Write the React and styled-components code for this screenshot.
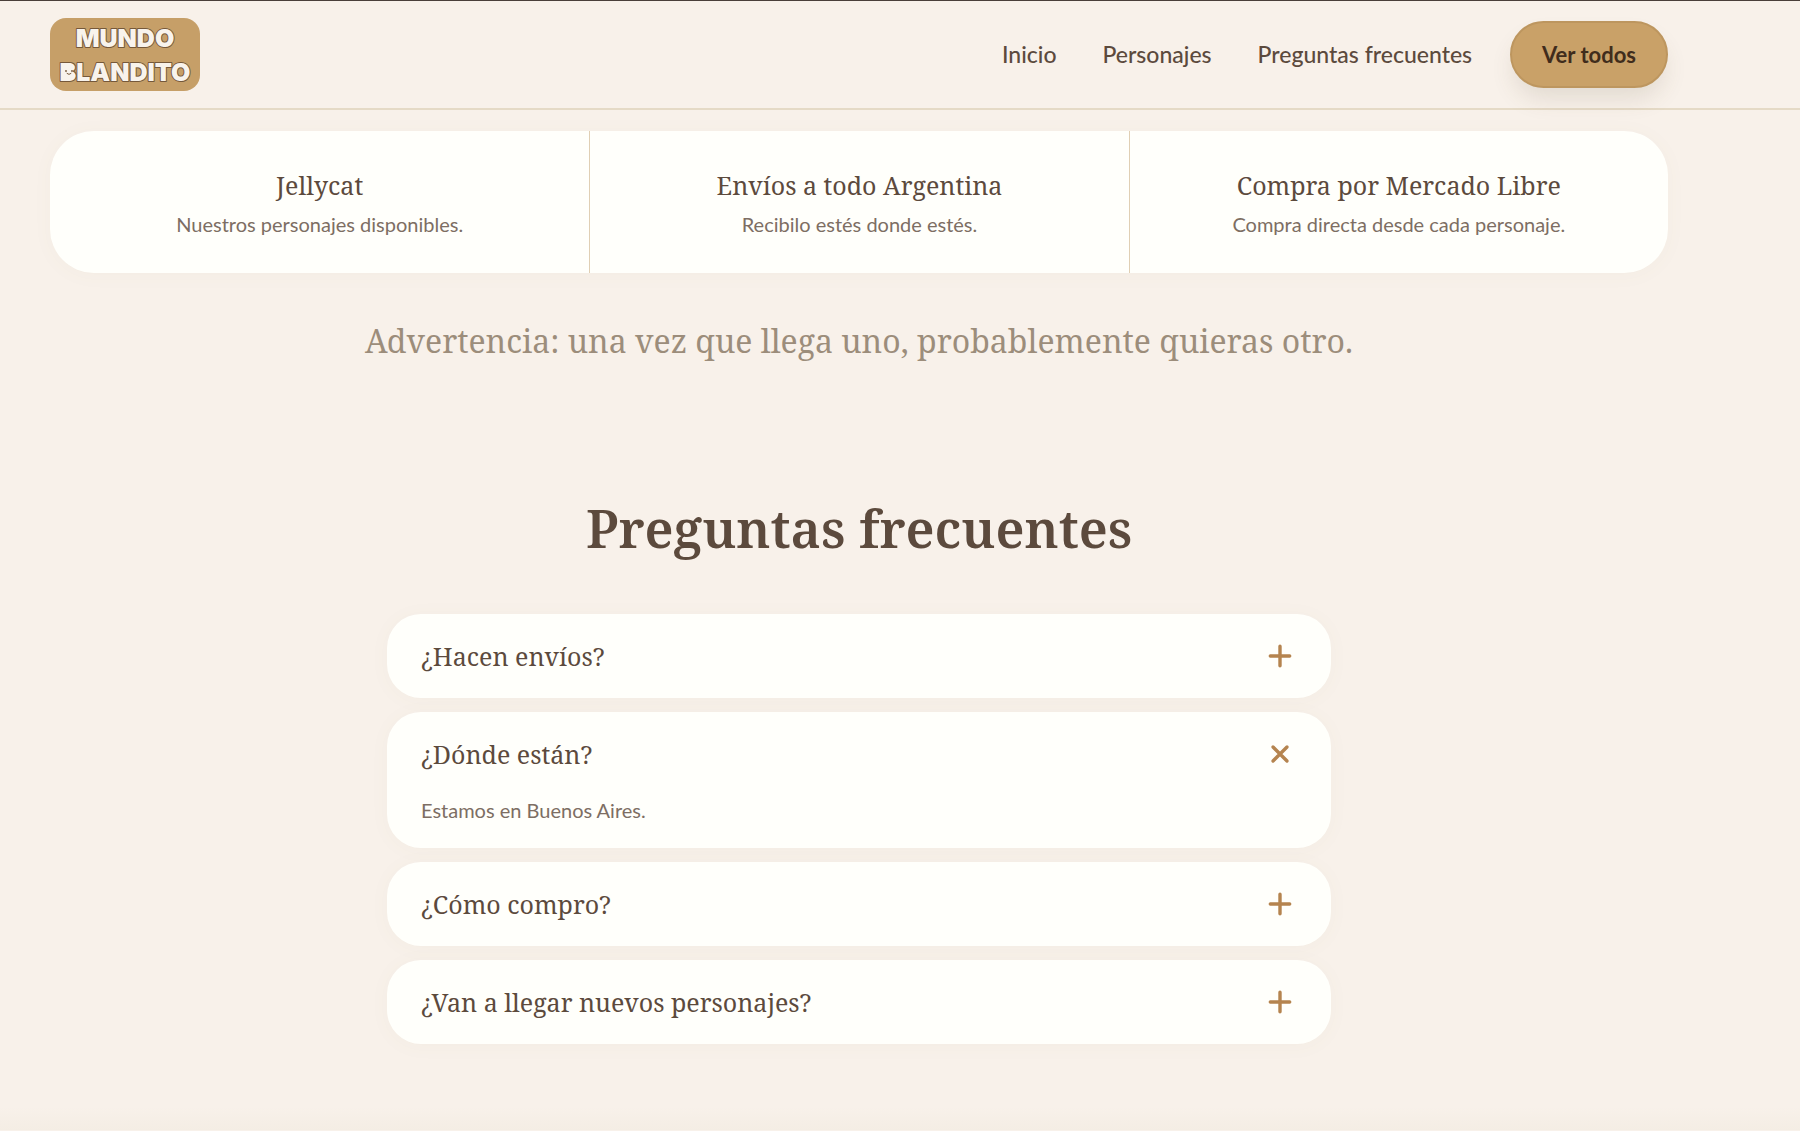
import React, { useState } from "react";
import styled, { createGlobalStyle, ThemeProvider } from "styled-components";

const theme = {
  background: "#f8f1ea",
  surface: "#fffffb",
  line: "#e5dac6",
  divider: "#e0cfb4",
  primary: "#c9a168",
  accent: "#b5844f",
  heading: "#5c4a3d",
  text: "#7d6e63",
  muted: "#9c8d7b",
  serif: '"Noto Serif", "DejaVu Serif Condensed", "DejaVu Serif", serif',
  sans: 'Lato, "Open Sans", sans-serif',
};

const GlobalStyle = createGlobalStyle`
  *, *::before, *::after {
    box-sizing: border-box;
  }
  body {
    margin: 0;
    background: ${({ theme }) => theme.background};
    color: ${({ theme }) => theme.heading};
    font-family: ${({ theme }) => theme.sans};
  }
  h1, h2, h3, p, ul {
    margin: 0;
    padding: 0;
  }
`;

// Header
const Header = styled.header`
  display: flex;
  align-items: center;
  justify-content: space-between;
  min-height: 110px;
  padding: 0 132px 0 50px;
  border-top: 1px solid #4a3f3a;
  border-bottom: 2px solid ${({ theme }) => theme.line};
`;

const LogoLink = styled.a`
  display: block;
  height: 73px;
  border-radius: 16px;
  overflow: hidden;
`;

const LogoText = styled.text`
  font-family: Inter, sans-serif;
  font-weight: 900;
  font-size: 25px;
  text-anchor: middle;
  fill: #f8f3ec;
  stroke: #75583a;
  stroke-width: 2px;
  stroke-linejoin: round;
  paint-order: stroke;
`;

const Nav = styled.nav`
  display: flex;
  align-items: center;
  gap: 46px;
`;

const NavLink = styled.a`
  padding-bottom: 2px;
  color: ${({ theme }) => theme.heading};
  font-size: 23px;
  font-weight: 500;
  line-height: 32px;
  text-decoration: none;
`;

const NavButton = styled.button`
  height: 67px;
  margin-left: -8px;
  padding: 0 30px;
  border: 2px solid #bd965f;
  border-radius: 34px;
  background: ${({ theme }) => theme.primary};
  color: #402c1c;
  font-family: inherit;
  font-size: 22px;
  font-weight: 700;
  box-shadow: 0 14px 24px -4px rgba(92, 80, 50, 0.14);
  cursor: pointer;
`;

// Main content
const Main = styled.main`
  padding: 21px 132px 63px 50px;
`;

const Features = styled.ul`
  display: grid;
  grid-template-columns: repeat(3, 1fr);
  list-style: none;
  border-radius: 44px;
  background: ${({ theme }) => theme.surface};
  box-shadow: 0 2px 20px rgba(120, 140, 80, 0.04);
`;

const Feature = styled.li`
  display: flex;
  flex-direction: column;
  gap: 8px;
  padding: 37px 24px 35px;
  text-align: center;
  & + & {
    border-left: 1px solid ${({ theme }) => theme.divider};
  }
`;

const FeatureTitle = styled.h3`
  font-family: ${({ theme }) => theme.serif};
  font-size: 25px;
  font-weight: 400;
  line-height: 34px;
`;

const BodyText = styled.p`
  color: ${({ theme }) => theme.text};
  font-size: 20px;
  line-height: 28px;
`;

const Tagline = styled.p`
  margin-top: 44px;
  color: ${({ theme }) => theme.muted};
  font-family: ${({ theme }) => theme.serif};
  font-size: 32px;
  line-height: 48px;
  text-align: center;
`;

const Faq = styled.section`
  display: flex;
  flex-direction: column;
  gap: 14px;
  max-width: 944px;
  margin: 127px auto 0;
`;

const FaqHeading = styled.h2`
  margin-bottom: 36px;
  font-family: ${({ theme }) => theme.serif};
  font-size: 52px;
  font-weight: 600;
  line-height: 72px;
  text-align: center;
`;

const FaqCard = styled.div`
  border-radius: 34px;
  background: ${({ theme }) => theme.surface};
  box-shadow: 0 2px 20px rgba(120, 140, 80, 0.04);
`;

const Question = styled.button`
  display: flex;
  align-items: center;
  justify-content: space-between;
  width: 100%;
  height: 84px;
  padding: 0 34px;
  border: 0;
  background: none;
  color: inherit;
  font-family: ${({ theme }) => theme.serif};
  font-size: 25px;
  text-align: left;
  cursor: pointer;
`;

const ToggleIcon = styled.svg`
  width: 34px;
  height: 34px;
  fill: none;
  stroke: ${({ theme }) => theme.accent};
  stroke-width: 3.4;
  stroke-linecap: round;
`;

const Answer = styled(BodyText)`
  padding: 0 34px 24px;
`;

const Footer = styled.footer`
  height: 23px;
  background: linear-gradient(#f8f1ea, #f4ede4);
`;

const features = [
  { title: "Jellycat", text: "Nuestros personajes disponibles." },
  { title: "Envíos a todo Argentina", text: "Recibilo estés donde estés." },
  { title: "Compra por Mercado Libre", text: "Compra directa desde cada personaje." },
];

const questions = [
  { title: "¿Hacen envíos?", answer: "Sí, a todo el país." },
  { title: "¿Dónde están?", answer: "Estamos en Buenos Aires." },
  { title: "¿Cómo compro?", answer: "Por Mercado Libre." },
  { title: "¿Van a llegar nuevos personajes?", answer: "Sí, muy pronto." },
];

const Logo = () => (
  <svg width="150" height="73" viewBox="0 0 150 73">
    <rect width="150" height="73" fill="#c69f68" />
    <LogoText x="75" y="29">MUNDO</LogoText>
    <LogoText x="75" y="63">BLANDITO</LogoText>
    {/* smiling face on the B */}
    <rect x="14" y="47" width="9" height="13" rx="3" fill="#f8f3ec" />
    <circle cx="16" cy="53" r="0.9" fill="#75583a" />
    <circle cx="22" cy="53" r="0.9" fill="#75583a" />
    <path d="M17 55.5q2 2 4 0" fill="none" stroke="#75583a" strokeLinecap="round" />
  </svg>
);

const FaqItem = ({ id, title, answer, defaultOpen }) => {
  const [isOpen, setIsOpen] = useState(defaultOpen);
  return (
    <FaqCard>
      <Question
        aria-expanded={isOpen}
        aria-controls={id}
        onClick={() => {
          setIsOpen(!isOpen);
        }}
      >
        {title}
        <ToggleIcon viewBox="0 0 34 34" aria-hidden="true">
          {isOpen ? (
            <path d="M10 10L24 24M24 10L10 24" />
          ) : (
            <path d="M17 7.3V26.7M7.3 17H26.7" />
          )}
        </ToggleIcon>
      </Question>
      {isOpen && <Answer id={id}>{answer}</Answer>}
    </FaqCard>
  );
};

const App = () => (
  <ThemeProvider theme={theme}>
    <GlobalStyle />
    <Header>
      <LogoLink href="#inicio" aria-label="Mundo Blandito">
        <Logo />
      </LogoLink>
      <Nav>
        <NavLink href="#inicio">Inicio</NavLink>
        <NavLink href="#personajes">Personajes</NavLink>
        <NavLink href="#preguntas">Preguntas frecuentes</NavLink>
        <NavButton>Ver todos</NavButton>
      </Nav>
    </Header>
    <Main>
      <Features>
        {features.map(({ title, text }) => (
          <Feature key={title}>
            <FeatureTitle>{title}</FeatureTitle>
            <BodyText>{text}</BodyText>
          </Feature>
        ))}
      </Features>
      <Tagline>Advertencia: una vez que llega uno, probablemente quieras otro.</Tagline>
      <Faq id="preguntas">
        <FaqHeading>Preguntas frecuentes</FaqHeading>
        {questions.map((question, index) => (
          <FaqItem
            key={question.title}
            id={`respuesta-${index}`}
            title={question.title}
            answer={question.answer}
            defaultOpen={index === 1}
          />
        ))}
      </Faq>
    </Main>
    <Footer />
  </ThemeProvider>
);

export default App;
